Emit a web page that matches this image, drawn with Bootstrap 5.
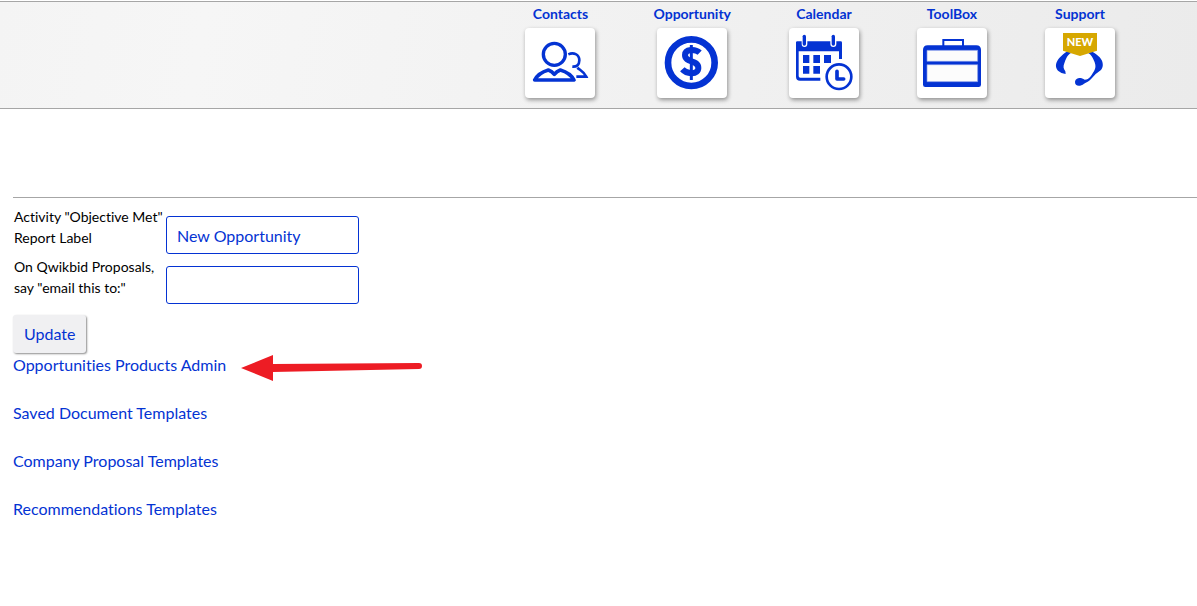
<!DOCTYPE html>
<html lang="en">
<head>
<meta charset="utf-8">
<meta name="viewport" content="width=device-width, initial-scale=1">
<title>Opportunity Settings</title>
<link href="https://cdn.jsdelivr.net/npm/bootstrap@5.3.0/dist/css/bootstrap.min.css" rel="stylesheet">
<style>
  :root { --brand: #0433d3; --rule: #a6a6a6; }
  body { font-family: Lato, sans-serif; font-size: 16px; line-height: 24px; color: #000; font-variant-ligatures: none; }
  a { color: var(--brand); text-decoration: none; }
  .topbar {
    margin-top: 1px;
    padding: 2px 82px 10px 12px;
    border-top: 1px solid var(--rule);
    border-bottom: 1px solid var(--rule);
    background: linear-gradient(100deg, #f4f4f4 0%, #f6f6f6 17%, #f3f3f3 40%, #ebebeb 100%);
  }
  .app-links { gap: 58px; }
  .app-links a { min-width: 70px; font-size: 14px; line-height: 20px; font-weight: 700; }
  .tile {
    width: 70px; height: 70px; margin-top: 4px;
    background: #fff; border-radius: 4px;
    box-shadow: 1px 2px 4px rgba(0, 0, 0, .4);
  }
  .tile svg { display: block; width: 100%; height: 100%; color: var(--brand); }
  .content { margin: 88px 0 0 13px; padding-top: 8px; border-top: 1px solid var(--rule); }
  .settings label { width: 153px; padding-left: 1px; font-size: 14px; line-height: 21px; }
  .settings .form-control {
    width: 193px; height: 38px; margin-top: 10px; padding: 6px 10px;
    border-color: var(--brand); border-radius: 3px; color: var(--brand); font-size: 16px;
  }
  .settings .field { min-height: 50px; }
  .btn-update {
    margin-top: 9px; padding: 7px 11px; border: 0; border-radius: 3px;
    color: var(--brand); background: #f0f0f2; font-size: 16px; line-height: 24px;
    box-shadow: 1px 1px 2px rgba(0, 0, 0, .45);
  }
  .arrow { left: 228px; top: -12px; }
</style>
</head>
<body>
<header class="topbar">
  <nav class="app-links d-flex justify-content-end" aria-label="Main">
    <a href="#" class="d-flex flex-column align-items-center">Contacts
      <span class="tile"><svg viewBox="42 84 210 210" fill="none" stroke="currentColor" aria-hidden="true">
        <circle cx="130" cy="163" r="33" stroke-width="10"/>
        <path d="M71 240C80 223 92 216 112 210Q123 214 130 223Q137 214 148 210C168 216 180 223 189 240Z" stroke-width="11" stroke-linejoin="round"/>
        <path d="M172 163C187 156 205 162 205 181C205 195 197 201 184 200M199 203C208 211 220 216 226 230H196" stroke-width="8"/>
      </svg></span></a>
    <a href="#" class="d-flex flex-column align-items-center">Opportunity
      <span class="tile"><svg viewBox="48 84 210 210" fill="none" stroke="currentColor" aria-hidden="true">
        <circle cx="151" cy="188" r="70" stroke-width="20"/>
        <path d="M176 158C163 146 132 146 132 165C132 190 172 178 172 204C172 224 138 224 124 208" stroke-width="18"/>
        <path d="M151 135V240" stroke-width="9"/>
      </svg></span></a>
    <a href="#" class="d-flex flex-column align-items-center">Calendar
      <span class="tile"><svg viewBox="39 84 210 210" fill="currentColor" aria-hidden="true">
        <path d="M60 127Q60 124 64 124H77V132Q77 141 85.500 141T94 132V124H163V132Q163 141 172 141T181 132V124H194Q198 124 198 128V177H189V154H68V228Q68 233 73 233H133V242H72Q60 242 60 230Z"/>
        <rect x="80" y="104" width="10" height="33" rx="5"/><rect x="167" y="104" width="10" height="33" rx="5"/>
        <path d="M81 165h19v24H81zM112 165h20v24h-20zM144 165h21v24h-21zM81 198h19v23H81zM112 198h20v23h-20z"/>
        <circle cx="189" cy="230" r="44" fill="#fff"/>
        <circle cx="189" cy="230" r="37" fill="none" stroke="currentColor" stroke-width="8"/>
        <path d="M183 214V237H203" fill="none" stroke="currentColor" stroke-width="11" stroke-linecap="round" stroke-linejoin="round"/>
      </svg></span></a>
    <a href="#" class="d-flex flex-column align-items-center">ToolBox
      <span class="tile"><svg viewBox="39 84 210 210" fill="none" stroke="currentColor" aria-hidden="true">
        <path d="M118 138V120H177V138" stroke-width="6"/>
        <path d="M71 136H217Q231 136 231 150V254Q231 261 224 261H64Q57 261 57 254V150Q57 136 71 136Z" fill="currentColor" stroke="none"/>
        <path d="M69 151H221V184H69ZM69 194H221V245H69Z" fill="#fcfcfc" stroke="#8096e8" stroke-width="2"/>
      </svg></span></a>
    <a href="#" class="d-flex flex-column align-items-center">Support
      <span class="tile"><svg viewBox="45 84 210 210" fill="currentColor" aria-hidden="true">
        <path d="M112 154C96 164 88 174 83 181C76 192 76 204 84 212Q94 221 107 222L106 214C100 206 99 200 103 190C107 179 110 166 124 158Z"/>
        <path d="M183 152C202 164 211 171 216 182C221 196 218 206 209 213Q196 221 186 234C177 245 169 248 162 251C149 262 134 258 135 245C137 232 153 231 164 239C179 239 184 225 191 215C199 203 197 193 192 182C188 172 185 165 174 158Z"/>
        <path d="M99 99H201V152L150 168L99 152Z" fill="#d6a700"/>
        <text x="150" y="137" text-anchor="middle" font-family="Lato, sans-serif" font-size="33" font-weight="900" fill="#fff">NEW</text>
      </svg></span></a>
  </nav>
</header>

<main class="content">
  <form class="settings" onsubmit="return false">
    <div class="field d-flex align-items-start">
      <label for="objective">Activity "Objective Met" Report Label</label>
      <input type="text" class="form-control" id="objective" value="New Opportunity">
    </div>
    <div class="field d-flex align-items-start">
      <label for="emailto">On Qwikbid Proposals, say "email this to:"</label>
      <input type="text" class="form-control" id="emailto">
    </div>
    <button type="submit" class="btn btn-update">Update</button>
  </form>
  <ul class="list-unstyled d-flex flex-column gap-4 mb-0">
    <li class="position-relative"><a href="#">Opportunities Products Admin</a>
      <svg class="arrow position-absolute" width="182" height="50" viewBox="0 0 182 50" aria-hidden="true">
        <path d="M0 27L32 14V23L178 22Q181 22 181 25T178 28L32 31V40Z" fill="#ed1c24"/>
      </svg></li>
    <li><a href="#">Saved Document Templates</a></li>
    <li><a href="#">Company Proposal Templates</a></li>
    <li><a href="#">Recommendations Templates</a></li>
  </ul>
</main>
<script src="https://cdn.jsdelivr.net/npm/bootstrap@5.3.0/dist/js/bootstrap.bundle.min.js"></script>
</body>
</html>
